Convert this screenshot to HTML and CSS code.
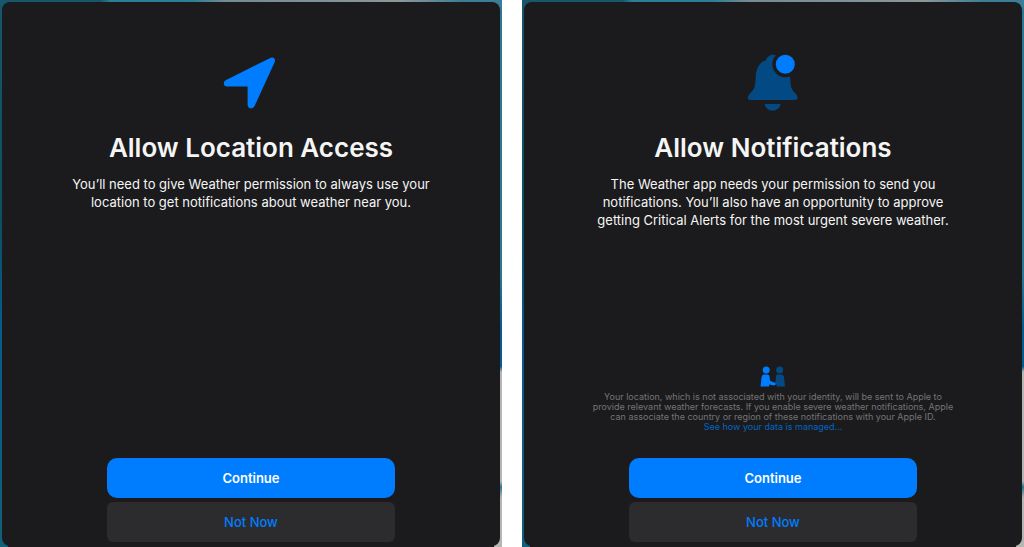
FILE: index.html
```
<!DOCTYPE html>
<html lang="en">

<head>
    <meta charset="UTF-8">
    <meta name="viewport" content="width=device-width, initial-scale=1.0">
    <link rel="stylesheet" href="styles.css">
    <title>Weather permissions</title>
</head>

<body>
    <main class="screens">
        <section class="screen">
            <div class="card">
                <svg class="icon" viewBox="0 0 56 60" aria-hidden="true">
                    <path class="blue" d="M3.200 28 L46.800 6.200 C50.500 4.400 53.200 7 51.500 10.500 L31.600 54 C29.800 57.700 24.600 57 24.600 52.800 V34.600 H4 C0.400 34.600 -0.500 29.800 3.200 28 Z" />
                </svg>
                <h1>Allow Location Access</h1>
                <p class="message">You’ll need to give Weather permission to always use your location to get
                    notifications about weather near you.</p>
                <div class="actions">
                    <button type="button" class="button continue">Continue</button>
                    <button type="button" class="button notNow">Not Now</button>
                </div>
            </div>
        </section>
        <section class="screen">
            <div class="card">
                <svg class="icon" viewBox="0 0 56 60" aria-hidden="true">
                    <path class="navy" d="M5.500 48 C2.400 48 2.200 44.800 4.200 42.500 C8 38.500 10 36.500 10.300 30 L10.800 24 C11.300 15.500 15.300 10 21 8.200 C22 4.800 25 2.800 28 2.800 C31 2.800 33.400 4.600 34.200 7.800 C40.500 9.800 44.500 15.500 45 24 L45.500 30 C45.800 36.500 47.500 38.500 51.300 42.500 C53.300 44.800 53.100 48 50 48 Z" />
                    <path class="navy" d="M19.600 52 H35.600 C34.800 56.200 31.600 58.600 27.600 58.600 S20.400 56.200 19.600 52 Z" />
                    <circle class="cutout" cx="40.300" cy="12.300" r="13" />
                    <circle class="blue" cx="40.300" cy="12.300" r="9.500" />
                </svg>
                <h1>Allow Notifications</h1>
                <p class="message">The Weather app needs your permission to send you notifications. You’ll also have an
                    opportunity to approve getting Critical Alerts for the most urgent severe weather.</p>
                <div class="privacy">
                    <svg class="people" viewBox="0 0 26 22" aria-hidden="true">
                        <circle class="navy" cx="19.700" cy="4" r="3.500" />
                        <path class="navy" d="M17.500 8.500 H21 Q23.700 8.500 24 11.500 L25 20.500 H17 L16.500 18.600 L12.800 19.500 L11.800 17.700 L15.600 15.400 L16 10.500 Q16.200 8.500 17.500 8.500 Z" />
                        <circle class="blue" cx="6.200" cy="4" r="3.500" />
                        <path class="blue" d="M4.500 8.500 H7.500 Q9.300 8.500 9.500 10.500 L10 14.400 L15.500 17.300 Q16 19.500 14 19.500 L9.300 18.500 L9 20.500 H0.500 L1.500 11.500 Q1.800 8.500 4.500 8.500 Z" />
                    </svg>
                    <p>Your location, which is not associated with your identity, will be sent to Apple to provide
                        relevant weather forecasts. If you enable severe weather notifications, Apple can associate the
                        country or region of these notifications with your Apple ID.</p>
                    <a href="#">See how your data is managed...</a>
                </div>
                <div class="actions">
                    <button type="button" class="button continue">Continue</button>
                    <button type="button" class="button notNow">Not Now</button>
                </div>
            </div>
        </section>
    </main>
</body>

</html>
```
FILE: styles.css
```
* {
    box-sizing: border-box;
}

body {
    margin: 0;
    background-color: white;
    font-family: Inter, "Liberation Sans", sans-serif;
}

.screens {
    display: grid;
    grid-template-columns: 1fr 1fr;
    gap: 20px;
    min-height: 100vh;
}

/* the weather map shows as a thin rim round each card */
.screen {
    display: flex;
    padding: 2px 2px 1px;
    background:
        linear-gradient(to right, #17566b 20%, #2c7d96 22%, #2c7d96 38%, #738b92 45%, #8c9799 80%, #3b7d97 92%) top / 100% 8px no-repeat,
        linear-gradient(#2f7893 50%, #075b8d 60%, #075b8d 67%, #b5b5b1 68%, #b5b5b1 88%, #2d7890 89%, #b5b5b1 91%) right / 8px 100% no-repeat,
        linear-gradient(#17566b, #0c5061 40%, #075b8d 60%, #126078) left / 8px 100% no-repeat,
        #1b1b1d;
}

.card {
    flex: 1;
    display: flex;
    flex-direction: column;
    align-items: center;
    padding: 50px 40px 4px;
    border-radius: 8px;
    background-color: #1b1b1d;
    color: #f5f5f5;
    text-align: center;
}

.icon {
    width: 56px;
    height: 60px;
}

.blue {
    fill: #007dfe;
}

.navy {
    fill: #034a85;
}

.cutout {
    fill: #1b1b1d;
}

h1 {
    margin: 18px 0 9px;
    font-size: 26px;
    font-weight: 600;
    line-height: 36px;
}

.message {
    max-width: 360px;
    margin: 0;
    font-size: 13px;
    line-height: 18px;
}

.privacy {
    display: flex;
    flex-direction: column;
    align-items: center;
    max-width: 368px;
    margin-top: auto;
    color: #747476;
    font-size: 9px;
    line-height: 10px;
}

.privacy p {
    margin: 4px 0 0;
}

.privacy a {
    color: #0066c2;
    text-decoration: none;
}

.people {
    width: 26px;
    height: 22px;
}

.actions {
    display: flex;
    flex-direction: column;
    gap: 4px;
    width: 69%;
    margin-top: auto;
}

.privacy + .actions {
    margin-top: 26px;
}

.button {
    height: 40px;
    border: 0;
    font-family: inherit;
    font-size: 13px;
    cursor: pointer;
}

.continue {
    border-radius: 10px;
    background-color: #007dfe;
    color: white;
    font-weight: 600;
}

.notNow {
    border-radius: 6px;
    background-color: #2c2c2e;
    color: #007dfe;
    font-weight: 500;
}
```
